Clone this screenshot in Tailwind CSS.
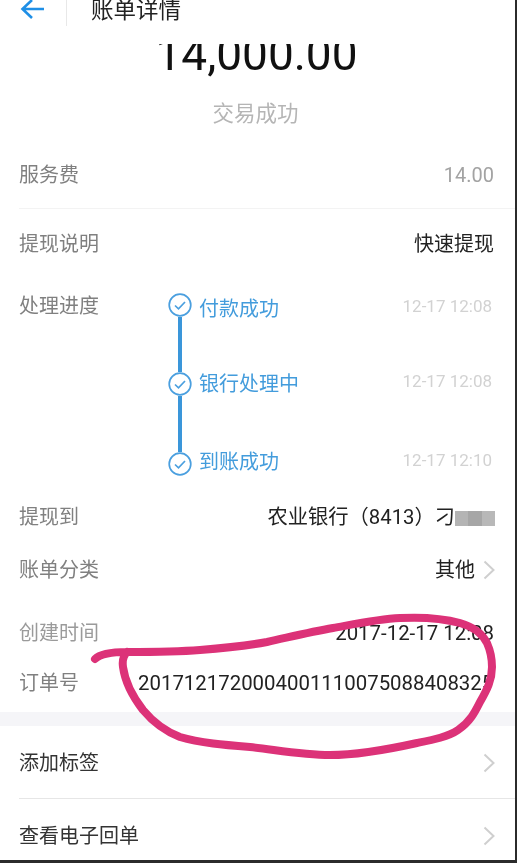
<!DOCTYPE html>
<html>
	<head>
		<meta charset="UTF-8" />
		<meta name="viewport" content="width=device-width, initial-scale=1.0" />
		<title>账单详情</title>
		<script src="https://cdn.jsdelivr.net/npm/@tailwindcss/browser@4"></script>
	</head>

	<body class="bg-[#2b2b2b]">
		<div
			class="relative w-[515px] h-[860px] overflow-hidden bg-white font-['Roboto','Noto_Sans_CJK_SC',sans-serif] text-[20px]"
		>
			<div class="blur-[0.5px]">
				<!-- header -->
				<header class="flex items-center h-[26px] pl-[20px]">
					<svg class="w-[26px] h-[24px] -mt-[4px]" viewBox="0 0 26 24" fill="none" stroke="#1f8fe6" stroke-width="2.6">
						<path d="M24 10H3M12 1 2.500 10 12 19" />
					</svg>
					<div class="w-px h-[26px] ml-[20px] bg-[#e8e8e8]"></div>
					<h1 class="ml-[24px] -mt-[6px] text-[22.500px] leading-[30px] text-[#222] whitespace-nowrap">账单详情</h1>
				</header>

				<!-- amount -->
				<div class="flex justify-center items-end h-[34px] mt-[18px] overflow-hidden">
					<span class="text-[46px] leading-[50px] -mb-[1px] pr-[2px] text-[#111]">14,000.00</span>
				</div>
				<p class="h-[30px] mt-[21px] pr-[4px] text-center text-[21.500px] leading-[30px] text-[#b5b5b5]">交易成功</p>

				<!-- fee -->
				<div class="flex justify-between items-center h-[67px] mt-[13px] ml-[19px] pr-[21px] border-b border-[#f3f3f3]">
					<span class="text-[#808080]">服务费</span>
					<span class="text-[#a3a3a3]">14.00</span>
				</div>

				<div class="flex justify-between items-center h-[69px] pl-[19px] pr-[21px]">
					<span class="text-[#808080]">提现说明</span>
					<span class="text-[#222]">快速提现</span>
				</div>

				<!-- progress -->
				<div class="flex h-[213px] pl-[19px] pr-[23px]">
					<span class="w-[149px] mt-[14px] leading-[28px] text-[#808080]">处理进度</span>
					<div class="flex flex-col flex-1 pt-[15px]">
						<div class="flex h-[79px]">
							<div class="flex flex-col items-center w-[24px]">
								<svg class="w-[24px] h-[24px] shrink-0" viewBox="0 0 24 24" fill="none" stroke="#4a9fdf" stroke-width="1.700">
									<circle cx="12" cy="12" r="10.800" />
									<path d="M7 12.500l3.500 3.300L17 9" />
								</svg>
								<div class="w-[3.500px] flex-1 bg-[#3a96da]"></div>
							</div>
							<span class="ml-[7px] mt-[2px] leading-[28px] text-[#439cdc]">付款成功</span>
							<span class="ml-auto -mt-[1px] text-[17px] leading-[28px] text-[#d2d2d2]">12-17 12:08</span>
						</div>
						<div class="flex h-[80px]">
							<div class="flex flex-col items-center w-[24px]">
								<svg class="w-[24px] h-[24px] shrink-0" viewBox="0 0 24 24" fill="none" stroke="#4a9fdf" stroke-width="1.700">
									<circle cx="12" cy="12" r="10.800" />
									<path d="M7 12.500l3.500 3.300L17 9" />
								</svg>
								<div class="w-[3.500px] flex-1 bg-[#3a96da]"></div>
							</div>
							<span class="ml-[7px] -mt-[2px] leading-[28px] text-[#439cdc]">银行处理中</span>
							<span class="ml-auto -mt-[5px] text-[17px] leading-[28px] text-[#d2d2d2]">12-17 12:08</span>
						</div>
						<div class="flex h-[24px]">
							<svg class="w-[24px] h-[24px] shrink-0" viewBox="0 0 24 24" fill="none" stroke="#4a9fdf" stroke-width="1.700">
								<circle cx="12" cy="12" r="10.800" />
								<path d="M7 12.500l3.500 3.300L17 9" />
							</svg>
							<span class="ml-[7px] -mt-[4px] leading-[28px] text-[#439cdc]">到账成功</span>
							<span class="ml-auto -mt-[6px] text-[17px] leading-[28px] text-[#d2d2d2]">12-17 12:10</span>
						</div>
					</div>
				</div>

				<div class="flex justify-between items-center h-[52px] pl-[19px] pr-[20px]">
					<span class="text-[#808080]">提现到</span>
					<span class="flex items-center text-[20.300px] text-[#222]">
						农业银行（8413）刁
						<span class="flex w-[40px] h-[15px] mt-[2px]">
							<i class="flex-1 bg-[#b4b4b4]"></i>
							<i class="flex-1 bg-[#a6a6a6]"></i>
							<i class="flex-1 bg-[#b8b8b8]"></i>
						</span>
					</span>
				</div>

				<div class="flex items-center h-[54px] pl-[19px] pr-[20px]">
					<span class="text-[#808080]">账单分类</span>
					<span class="ml-auto text-[#222]">其他</span>
					<svg class="w-[12px] h-[20px] ml-[8px]" viewBox="0 0 12 20" fill="none" stroke="#cfcfcf" stroke-width="2">
						<path d="M1.500 1.500 10.500 10 1.500 18.500" />
					</svg>
				</div>

				<div class="flex justify-between items-center h-[50px] mt-[11px] pl-[19px] pr-[21px]">
					<span class="text-[#9a9a9a]">创建时间</span>
					<span class="text-[20.400px] text-[#222]">2017-12-17 12:08</span>
				</div>

				<div class="flex items-center h-[50px] pl-[19px]">
					<span class="w-[119px] shrink-0 text-[#808080]">订单号</span>
					<span class="w-[353px] overflow-hidden whitespace-nowrap text-[20.400px] text-[#222]">2017121720004001110075088408325</span>
				</div>

				<div class="h-[14px] mt-[4px] bg-[#f5f5f8]"></div>

				<div class="flex justify-between items-center h-[73px] pt-[2px] ml-[19px] pr-[20px] border-b border-[#e6e6e6]">
					<span class="text-[#333]">添加标签</span>
					<svg class="w-[12px] h-[20px]" viewBox="0 0 12 20" fill="none" stroke="#cfcfcf" stroke-width="2">
						<path d="M1.500 1.500 10.500 10 1.500 18.500" />
					</svg>
				</div>

				<div class="flex justify-between items-center h-[73px] ml-[19px] pr-[20px]">
					<span class="text-[#333]">查看电子回单</span>
					<svg class="w-[12px] h-[20px]" viewBox="0 0 12 20" fill="none" stroke="#cfcfcf" stroke-width="2">
						<path d="M1.500 1.500 10.500 10 1.500 18.500" />
					</svg>
				</div>
			</div>

			<!-- hand drawn marker on top of the screenshot -->
			<svg class="absolute inset-0 w-[515px] h-[860px] pointer-events-none" viewBox="0 0 515 860" fill="none" stroke="#dc3278" stroke-width="8" stroke-linecap="round" stroke-linejoin="round">
				<path d="M95 659C100 654 112 652 127 652C150 652 175 652 200 650C225 648 245 646 267 642C290 637 310 632 333 628C355 624 378 619 400 618C420 617 442 618 460 623C474 627 483 635 487 643C491 652 492 660 492 667C492 680 487 690 480 702C475 712 470 722 458 730C448 737 432 740 417 743C390 749 360 755 330 755C303 755 277 750 250 747C225 745 200 743 180 737C167 732 153 722 143 710C133 697 125 682 123 667C122 660 124 655 127 652" />
			</svg>
		</div>
	</body>
</html>
